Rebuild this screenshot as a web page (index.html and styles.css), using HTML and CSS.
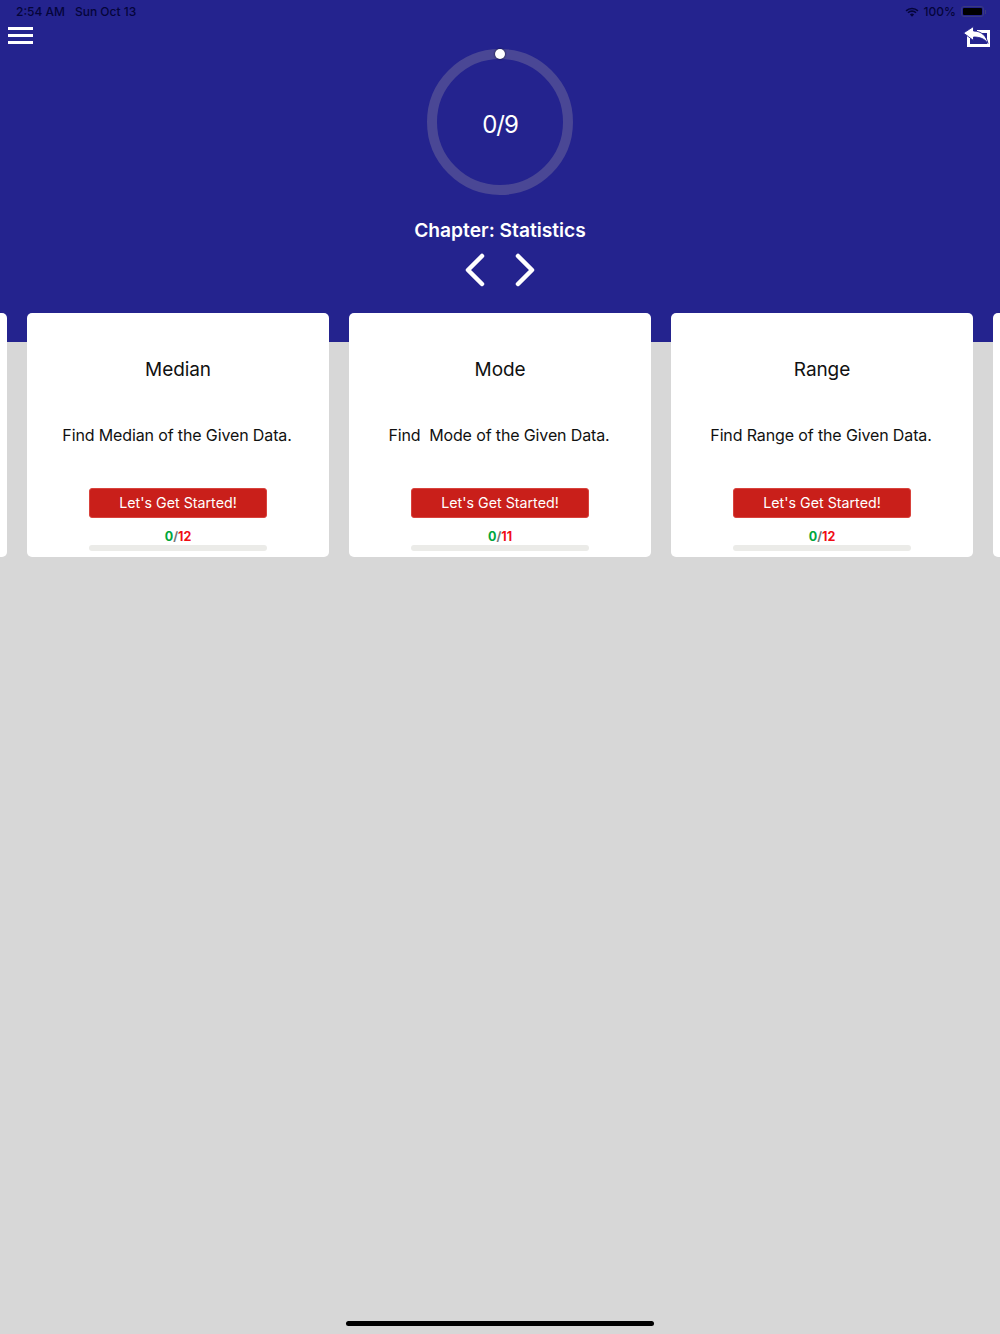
FILE: index.html
```html
<!DOCTYPE html>
<html>
<head>
	<meta charset="UTF-8">
	<title>Chapter: Statistics</title>
	<link rel="stylesheet" href="styles.css">
</head>
<body>
	<div class="page">
		<div class="header">
			<div class="statusbar">
				<div class="status-left"><span>2:54 AM</span><span>Sun Oct 13</span></div>
				<div class="status-right">
					<svg class="wifi" width="14" height="10" viewBox="0 0 14 10">
						<path d="M7 9.8 4.9 7.6a3 3 0 0 1 4.2 0z" fill="#05053a"/>
						<path d="M1.1 3.9a8.4 8.4 0 0 1 11.8 0M3 5.8a5.7 5.7 0 0 1 8 0" fill="none" stroke="#05053a" stroke-width="1.6"/>
					</svg>
					<span>100%</span>
					<div class="battery"><div class="battery-fill"></div></div>
					<div class="battery-cap"></div>
				</div>
			</div>
			<div class="top">
				<div class="menu-icon"><span></span><span></span><span></span></div>
				<div class="center">
					<div class="ring">
						<svg width="146" height="146" viewBox="0 0 146 146">
							<circle cx="73" cy="73" r="68" fill="none" stroke="#4a4795" stroke-width="10"/>
						</svg>
						<div class="ring-dot"></div>
						<div class="ring-label">0/9</div>
					</div>
					<div class="chapter">Chapter: Statistics</div>
					<div class="arrows">
						<svg width="22" height="34" viewBox="0 0 22 34"><path d="M18 3 4 17l14 14" fill="none" stroke="#fff" stroke-width="4.5" stroke-linecap="round" stroke-linejoin="round"/></svg>
						<svg width="22" height="34" viewBox="0 0 22 34"><path d="M4 3l14 14L4 31" fill="none" stroke="#fff" stroke-width="4.5" stroke-linecap="round" stroke-linejoin="round"/></svg>
					</div>
				</div>
				<svg class="share-icon" width="28" height="22" viewBox="0 0 28 22">
					<path d="M5 10v11h23V4H15v3h10v11H8v-8z" fill="#fff"/>
					<path d="M1.500 7 11.500 .5v4.500c8 0 13 5 14.500 12.500-3-4.500-8-6.500-14.500-6.500v3.500z" fill="#fff" stroke="#24238e" stroke-width=".9"/>
				</svg>
			</div>
		</div>

		<div class="cards">
			<div class="card"></div>
			<div class="card">
				<div class="card-title">Median</div>
				<div class="card-text">Find Median of the Given Data.</div>
				<button class="button">Let's Get Started!</button>
				<div class="count"><span class="done">0</span>/<span class="total">12</span></div>
				<div class="bar"></div>
			</div>
			<div class="card">
				<div class="card-title">Mode</div>
				<div class="card-text">Find&nbsp; Mode of the Given Data.</div>
				<button class="button">Let's Get Started!</button>
				<div class="count"><span class="done">0</span>/<span class="total">11</span></div>
				<div class="bar"></div>
			</div>
			<div class="card">
				<div class="card-title">Range</div>
				<div class="card-text">Find Range of the Given Data.</div>
				<button class="button">Let's Get Started!</button>
				<div class="count"><span class="done">0</span>/<span class="total">12</span></div>
				<div class="bar"></div>
			</div>
			<div class="card"></div>
		</div>

		<div class="home-indicator"></div>
	</div>
</body>
</html>
```

FILE: styles.css
```css
* {
	box-sizing: border-box;
}
body {
	margin: 0;
	background-color: #d7d7d7;
	font-family: Inter, 'Noto Sans', sans-serif;
}
.page {
	display: flex;
	flex-direction: column;
	height: 1334px;
	overflow: hidden;
}
.header {
	height: 342px;
	background-color: #24238e;
	flex-shrink: 0;
}
.statusbar {
	display: flex;
	justify-content: space-between;
	align-items: center;
	height: 23px;
	margin-bottom: 1px;
	padding: 0 14px 0 16px;
	font-size: 12px;
	font-weight: 500;
	color: #05053a;
}
.status-left {
	display: flex;
	gap: 10px;
}
.status-right {
	display: flex;
	align-items: center;
	gap: 5px;
}
.battery {
	width: 23px;
	height: 11px;
	padding: 1px;
	border: 1px solid #3a3a80;
	border-radius: 3px;
}
.battery-fill {
	height: 100%;
	background-color: #000;
	border-radius: 1px;
}
.battery-cap {
	width: 1px;
	height: 4px;
	margin-left: -4px;
	background-color: #3a3a80;
}
.top {
	display: grid;
	grid-template-columns: 1fr auto 1fr;
	padding: 0 10px;
}
.menu-icon {
	display: flex;
	flex-direction: column;
	gap: 4px;
	width: 25px;
	margin: 3px 0 0 -2px;
}
.menu-icon span {
	height: 3px;
	background-color: #fff;
}
.center {
	display: flex;
	flex-direction: column;
	align-items: center;
	padding-top: 25px;
}
.ring {
	position: relative;
	width: 146px;
	height: 146px;
}
.ring svg {
	display: block;
}
.ring-dot {
	position: absolute;
	top: 0;
	left: 68px;
	width: 10px;
	height: 10px;
	border-radius: 50%;
	background-color: #fff;
	box-shadow: 0 0 2px #111;
}
.ring-label {
	position: absolute;
	top: 0;
	left: 0;
	width: 100%;
	line-height: 152px;
	text-align: center;
	font-size: 24px;
	letter-spacing: -1px;
	color: #fff;
}
.chapter {
	margin-top: 22px;
	font-size: 19.2px;
	font-weight: 600;
	line-height: 26px;
	color: #fff;
}
.arrows {
	display: flex;
	gap: 28px;
	margin-top: 10px;
}
.share-icon {
	justify-self: end;
	margin-top: 2px;
}
.cards {
	display: flex;
	justify-content: center;
	gap: 20px;
	margin-top: -29px;
}
.card {
	display: flex;
	flex-direction: column;
	align-items: center;
	flex-shrink: 0;
	width: 302px;
	height: 244px;
	background-color: #fff;
	border-radius: 5px;
	color: #111;
}
.card-title {
	margin-top: 44px;
	font-size: 19px;
	letter-spacing: -.1px;
	line-height: 26px;
}
.card-text {
	margin-top: 42px;
	padding-right: 2px;
	font-size: 16px;
	letter-spacing: -.13px;
	line-height: 20px;
}
.button {
	width: 178px;
	height: 30px;
	margin-top: 43px;
	padding: 0 0 2px;
	border: 1px solid #d8423c;
	border-radius: 3px;
	background-color: #c91f1a;
	color: #fff;
	font-family: inherit;
	font-size: 14.25px;
}
.count {
	margin-top: 11px;
	font-size: 12.5px;
	font-weight: 700;
	line-height: 15px;
	color: #777;
}
.done {
	color: #00a63c;
}
.total {
	color: #f00d15;
}
.bar {
	width: 178px;
	height: 6px;
	margin-top: 1px;
	border-radius: 3px;
	background-color: #ebebe8;
}
.home-indicator {
	width: 308px;
	height: 5px;
	margin: auto auto 8px;
	border-radius: 3px;
	background-color: #000;
}
```
